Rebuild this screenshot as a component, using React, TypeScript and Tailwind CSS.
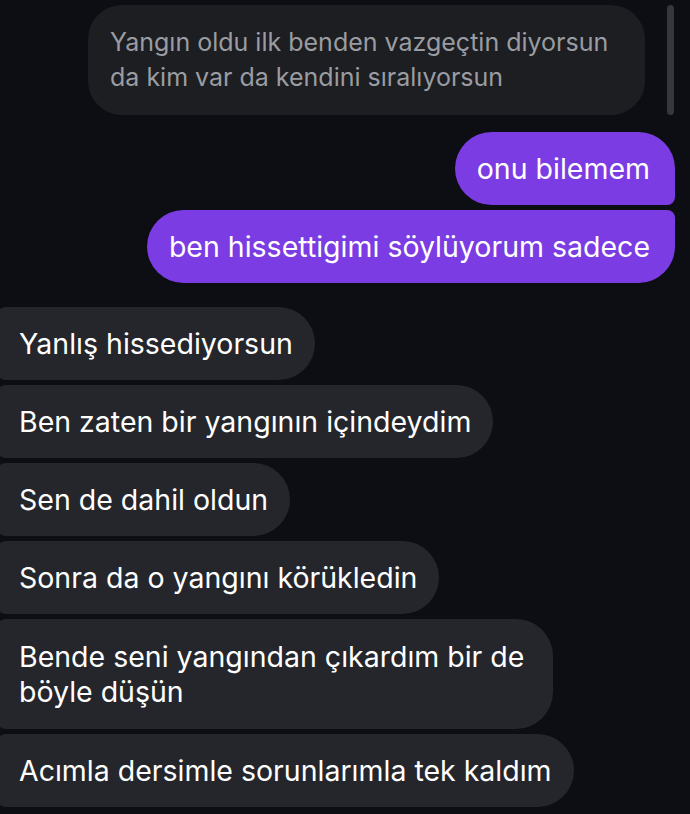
const replies = [
  { text: "Yanlış hissediyorsun", wide: false },
  { text: "Ben zaten bir yangının içindeydim", wide: false },
  { text: "Sen de dahil oldun", wide: false },
  { text: "Sonra da o yangını körükledin", wide: false },
  { text: "Bende seni yangından çıkardım bir de böyle düşün", wide: true },
  { text: "Acımla dersimle sorunlarımla tek kaldım", wide: false },
];

export default function App() {
  return (
    <div
      className="relative h-[814px] w-[690px] overflow-hidden bg-[#0c0e13] text-white"
      style={{ fontFamily: "Inter, 'Noto Sans', sans-serif" }}
    >
      {/* scrollbar */}
      <div className="absolute right-[16px] top-[5px] h-[110px] w-[7px] rounded-full bg-[#35373d]" />

      <div className="flex flex-col pt-[5px]">
        {/* quoted message */}
        <div className="ml-[88px] w-[557px] rounded-[34px] bg-[#1c1e22] px-[22px] py-[20px] text-[25px] leading-[35px] text-[#9b9ca1]">
          Yangın oldu ilk benden vazgeçtin diyorsun da kim var da kendini sıralıyorsun
        </div>

        {/* sent */}
        <div className="mt-[17px] flex flex-col items-end gap-[5px] pr-[15px]">
          <div className="rounded-l-[37px] rounded-tr-[37px] rounded-br-[8px] bg-[#7b3ce3] py-[19px] pl-[22px] pr-[25px] text-[28.5px] leading-[35px]">
            onu bilemem
          </div>
          <div className="rounded-l-[37px] rounded-br-[37px] rounded-tr-[8px] bg-[#7b3ce3] py-[19px] pl-[22px] pr-[25px] text-[28.5px] leading-[35px]">
            ben hissettigimi söylüyorum sadece
          </div>
        </div>

        {/* received */}
        <div className="mt-[24px] flex flex-col items-start gap-[5px]">
          {replies.map((r) => (
            <div
              key={r.text}
              className={
                r.wide
                  ? "-ml-[4px] w-[557px] rounded-l-[10px] rounded-r-[37px] bg-[#24262b] py-[20px] pl-[23px] pr-[22px] text-[28.5px] leading-[35px]"
                  : "-ml-[4px] rounded-l-[10px] rounded-r-[37px] bg-[#24262b] py-[19px] pl-[23px] pr-[22px] text-[28.5px] leading-[35px] whitespace-nowrap"
              }
            >
              {r.text}
            </div>
          ))}
        </div>
      </div>
    </div>
  );
}
